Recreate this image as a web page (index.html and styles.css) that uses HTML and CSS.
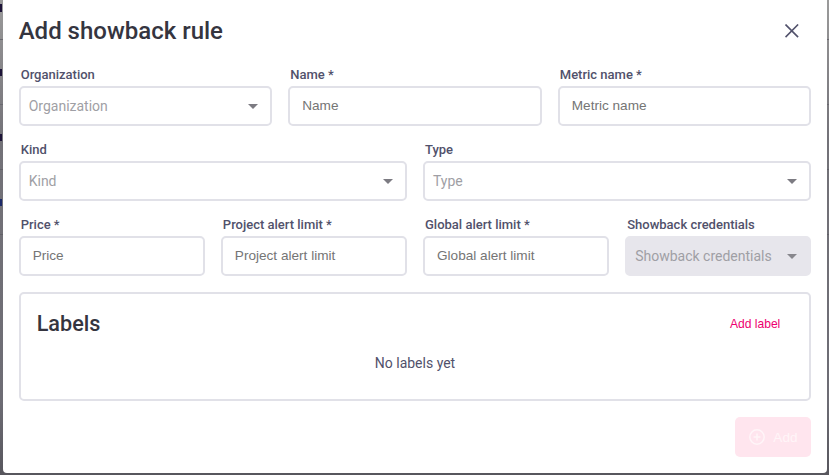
FILE: index.html
```
<!DOCTYPE html>
<html lang="en">
<head>
<meta charset="utf-8">
<title>Add showback rule</title>
<link rel="stylesheet" href="styles.css">
</head>
<body>
<main class="dialog">
  <header class="dialog-header">
    <h1>Add showback rule</h1>
    <button class="close" aria-label="Close"><svg width="14" height="14" viewBox="0 0 14 14"><path d="M.5 .5l12.6 12.6M13.1 .5L.5 13.1"/></svg></button>
  </header>
  <form class="form">
    <div class="row row-3">
      <div class="field"><label>Organization</label><div class="select"><span>Organization</span><i class="arrow"></i></div></div>
      <div class="field"><label>Name *</label><input placeholder="Name"></div>
      <div class="field"><label>Metric name *</label><input placeholder="Metric name"></div>
    </div>
    <div class="row row-2">
      <div class="field"><label>Kind</label><div class="select"><span>Kind</span><i class="arrow"></i></div></div>
      <div class="field"><label>Type</label><div class="select"><span>Type</span><i class="arrow"></i></div></div>
    </div>
    <div class="row row-4">
      <div class="field"><label>Price *</label><input placeholder="Price"></div>
      <div class="field"><label>Project alert limit *</label><input placeholder="Project alert limit"></div>
      <div class="field"><label>Global alert limit *</label><input placeholder="Global alert limit"></div>
      <div class="field"><label>Showback credentials</label><div class="select disabled"><span>Showback credentials</span><i class="arrow"></i></div></div>
    </div>
    <section class="labels">
      <div class="labels-header"><h2>Labels</h2><button type="button" class="link">Add label</button></div>
      <p>No labels yet</p>
    </section>
    <button type="button" class="submit"><svg width="16" height="16" viewBox="0 0 16 16"><circle cx="8" cy="8" r="7.2"/><path d="M8 4.6v6.8M4.6 8h6.8"/></svg><span>Add</span></button>
  </form>
</main>
</body>
</html>
```
FILE: styles.css
```
* { box-sizing: border-box; }
body {
  margin: 0;
  height: 475px;
  padding: 0 1.7px 2px 2.7px;
  overflow: hidden;
  font-family: Roboto, sans-serif;
  color: #51516b;
  /* table behind the dialog: clipped row text, row dividers, shade */
  background:
    linear-gradient(#1d1438, #1d1438) 0 4px / 2px 8px no-repeat,
    linear-gradient(#1d1438, #1d1438) 0 69px / 2px 7px no-repeat,
    linear-gradient(#1d1438, #1d1438) 0 134px / 2px 7px no-repeat,
    linear-gradient(#1d2a68, #1d2a68) 0 199px / 2px 7px no-repeat,
    linear-gradient(#6a6970, #6a6970) 0 39px / 100% 1px no-repeat,
    linear-gradient(#6a6970, #6a6970) 0 104px / 100% 1px no-repeat,
    linear-gradient(#626168, #626168) 0 169px / 100% 1px no-repeat,
    linear-gradient(#626168, #626168) 0 234px / 100% 1px no-repeat,
    linear-gradient(#9b9b9b 0, #89888b 60px, #737278 140px, #6d6c74 400px, #57565d 475px);
}
.dialog {
  height: 473px;
  padding: 0 16px 16px;
  background: #fff;
  border-radius: 0 0 4px 4px;
}
.dialog-header {
  display: flex;
  align-items: center;
  justify-content: space-between;
  height: 62px;
}
h1, h2, p { margin: 0; }
h1 { font-size: 24px; font-weight: 500; line-height: 28px; color: #35353f; }
button { border: 0; padding: 0; background: none; }
.close { width: 14px; height: 14px; margin-right: 12px; }
svg { display: block; fill: none; }
.close svg { stroke: #51516b; stroke-width: 1.6; }
.row { display: grid; gap: 16px; height: 75px; }
.row-2 { grid-template-columns: repeat(2, 1fr); }
.row-3 { grid-template-columns: repeat(3, 1fr); }
.row-4 { grid-template-columns: repeat(4, 1fr); }
.field { min-width: 0; padding-top: 5px; }
label {
  display: block;
  height: 19px;
  padding-left: 2px;
  font-size: 13px;
  font-weight: 500;
  line-height: 15px;
}
input, .select {
  display: flex;
  align-items: center;
  width: 100%;
  height: 40px;
  border: 2px solid #e1e1e8;
  border-radius: 5px;
  background: #fff;
}
input { padding: 0 12px 1px; font: 13.6px "Liberation Sans", sans-serif; }
input::placeholder { color: #757575; }
.select {
  justify-content: space-between;
  padding: 0 12px 0 8px;
  font-size: 14px;
  color: #9f9fa5;
  white-space: nowrap;
}
.disabled { background: #e7e6ec; border-color: #e7e6ec; }
.arrow {
  border: 5px solid transparent;
  border-top-color: #7c7b82;
  border-bottom: 0;
}
.disabled .arrow { border-top-color: #88878d; }
.labels {
  height: 109px;
  margin-top: 5px;
  padding: 17px 16px 15px;
  border: 2px solid #e1e1e8;
  border-radius: 5px;
}
.labels-header { display: flex; justify-content: space-between; align-items: center; height: 26px; }
h2 { font-size: 21.6px; font-weight: 500; line-height: 26px; color: #35353f; }
.link { margin-right: 13px; font: 12.1px "Liberation Sans", sans-serif; color: #ee0070; }
.labels p { margin-top: 18px; font-size: 14px; line-height: 16px; text-align: center; }
.submit {
  display: flex;
  align-items: center;
  gap: 8px;
  width: 76px;
  height: 40px;
  margin: 16px 0 0 auto;
  padding-left: 14px;
  border-radius: 5px;
  background: #ffe5ee;
  font: 13.6px "Liberation Sans", sans-serif;
  color: #fff5f8;
}
.submit svg { stroke: #fff5f8; stroke-width: 1.5; }
```
